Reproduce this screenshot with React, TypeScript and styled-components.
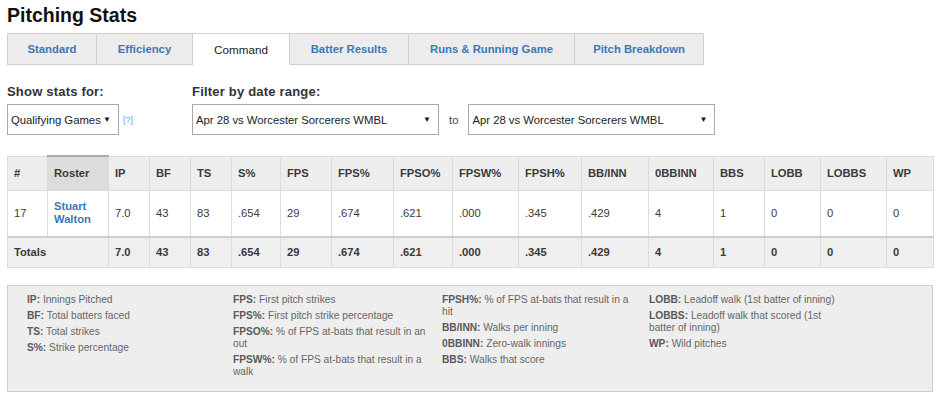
import React from "react";
import styled, { createGlobalStyle } from "styled-components";

const GlobalStyle = createGlobalStyle`
  body {
    margin: 0;
    background: #fff;
    font-family: "Liberation Sans", Arial, sans-serif;
    color: #333;
  }
`;

interface Column {
  key: string;
  width: number;
}

const columns: Column[] = [
  { key: "#", width: 40 },
  { key: "Roster", width: 61 },
  { key: "IP", width: 41 },
  { key: "BF", width: 41 },
  { key: "TS", width: 41 },
  { key: "S%", width: 49 },
  { key: "FPS", width: 51 },
  { key: "FPS%", width: 62 },
  { key: "FPSO%", width: 59 },
  { key: "FPSW%", width: 66 },
  { key: "FPSH%", width: 63 },
  { key: "BB/INN", width: 67 },
  { key: "0BBINN", width: 65 },
  { key: "BBS", width: 51 },
  { key: "LOBB", width: 56 },
  { key: "LOBBS", width: 66 },
  { key: "WP", width: 47 },
];

const playerRow = ["7.0", "43", "83", ".654", "29", ".674", ".621", ".000", ".345", ".429", "4", "1", "0", "0", "0"];

const tabs = [
  { name: "Standard", width: 90 },
  { name: "Efficiency", width: 96 },
  { name: "Command", width: 97 },
  { name: "Batter Results", width: 119 },
  { name: "Runs & Running Game", width: 166 },
  { name: "Pitch Breakdown", width: 129 },
];

const legend: [string, string][][] = [
  [
    ["IP:", "Innings Pitched"],
    ["BF:", "Total batters faced"],
    ["TS:", "Total strikes"],
    ["S%:", "Strike percentage"],
  ],
  [
    ["FPS:", "First pitch strikes"],
    ["FPS%:", "First pitch strike percentage"],
    ["FPSO%:", "% of FPS at-bats that result in an out"],
    ["FPSW%:", "% of FPS at-bats that result in a walk"],
  ],
  [
    ["FPSH%:", "% of FPS at-bats that result in a hit"],
    ["BB/INN:", "Walks per inning"],
    ["0BBINN:", "Zero-walk innings"],
    ["BBS:", "Walks that score"],
  ],
  [
    ["LOBB:", "Leadoff walk (1st batter of inning)"],
    ["LOBBS:", "Leadoff walk that scored (1st batter of inning)"],
    ["WP:", "Wild pitches"],
  ],
];

const Page = styled.div`
  padding: 0 7px;
  width: 926px;
`;

const Title = styled.h1`
  margin: 0;
  padding-top: 3px;
  font-size: 19.5px;
  line-height: 24px;
  font-weight: bold;
  color: #111;
`;

const TabBar = styled.div`
  display: flex;
  margin-top: 6px;
`;

const Tab = styled.div<{ $active?: boolean; $w: number }>`
  width: ${(p) => p.$w}px;
  height: 32px;
  box-sizing: border-box;
  display: flex;
  align-items: center;
  justify-content: center;
  font-size: ${(p) => (p.$active ? "11.7px" : "11.3px")};
  font-weight: ${(p) => (p.$active ? "normal" : "bold")};
  color: ${(p) => (p.$active ? "#222" : "#3b78b5")};
  background: ${(p) => (p.$active ? "#fff" : "#ececec")};
  border: 1px solid #d0d0d0;
  border-left: none;
  border-bottom-color: ${(p) => (p.$active ? "#fff" : "#d0d0d0")};

  &:first-child {
    border-left: 1px solid #d0d0d0;
  }
`;

const Filters = styled.div`
  display: flex;
  margin-top: 19px;
`;

const FilterGroup = styled.div<{ $w?: number }>`
  display: flex;
  flex-direction: column;
  flex-shrink: 0;
  gap: 5px;
  width: ${(p) => (p.$w ? `${p.$w}px` : "auto")};
`;

const Label = styled.div`
  font-size: 13px;
  font-weight: bold;
  letter-spacing: 0.2px;
  color: #333;
  line-height: 15px;
`;

const Controls = styled.div`
  display: flex;
  align-items: center;
`;

const Select = styled.div<{ $w: number }>`
  width: ${(p) => p.$w}px;
  height: 31px;
  box-sizing: border-box;
  border: 1px solid #a9a9a9;
  background: #fff;
  display: flex;
  align-items: center;
  justify-content: space-between;
  padding: 0 7px 0 3px;
  font-size: 11.3px;
  color: #222;
  white-space: nowrap;
`;

const Arrow = styled.span`
  font-size: 8px;
  color: #111;
`;

const Help = styled.span`
  font-size: 9px;
  color: #7b9bc0;
  margin-left: 4px;
`;

const To = styled.span`
  font-size: 11.3px;
  color: #444;
  margin: 0 10px;
`;

const Table = styled.table`
  margin-top: 20px;
  border-collapse: collapse;
  table-layout: fixed;
  width: 926px;
  font-size: 11.2px;
  color: #3a3a3a;
`;

const Th = styled.th<{ $sorted?: boolean }>`
  text-align: left;
  font-weight: bold;
  height: 34px;
  padding: 0 6px;
  box-sizing: border-box;
  background: ${(p) => (p.$sorted ? "#dcdcdc" : "#eeeeee")};
  border: 1px solid #dcdcdc;
  border-top: ${(p) => (p.$sorted ? "2px solid #aaa" : "1px solid #dcdcdc")};
`;

const Td = styled.td<{ $total?: boolean }>`
  text-align: left;
  padding: 0 6px;
  height: ${(p) => (p.$total ? "29px" : "45px")};
  font-weight: ${(p) => (p.$total ? "bold" : "normal")};
  background: ${(p) => (p.$total ? "#efefef" : "#fff")};
  border: 1px solid #dcdcdc;
  border-top: ${(p) => (p.$total ? "2px solid #cfcfcf" : "1px solid #dcdcdc")};
`;

const PlayerLink = styled.a`
  color: #3b78b5;
  font-weight: bold;
  text-decoration: none;
  display: block;
  line-height: 13px;
`;

const Legend = styled.div`
  margin-top: 17px;
  height: 107px;
  box-sizing: border-box;
  background: #eeeeee;
  border: 1px solid #cccccc;
  padding: 8px 0 0 19px;
  display: grid;
  grid-template-columns: 206px 209px 207px 207px;
`;

const LegendCol = styled.div`
  display: flex;
  flex-direction: column;
  gap: 4px;
  padding-right: 9px;
`;

const LegendItem = styled.div`
  font-size: 10.2px;
  line-height: 12px;
  color: #666;

  b {
    color: #5a5a5a;
  }
`;

export default function App() {
  return (
    <>
      <GlobalStyle />
      <Page>
        <Title>Pitching Stats</Title>
        <TabBar>
          {tabs.map((t) => (
            <Tab key={t.name} $w={t.width} $active={t.name === "Command"}>
              {t.name}
            </Tab>
          ))}
        </TabBar>

        <Filters>
          <FilterGroup $w={185}>
            <Label>Show stats for:</Label>
            <Controls>
              <Select $w={112}>
                <span>Qualifying Games</span>
                <Arrow>▼</Arrow>
              </Select>
              <Help>[?]</Help>
            </Controls>
          </FilterGroup>
          <FilterGroup>
            <Label>Filter by date range:</Label>
            <Controls>
              <Select $w={247}>
                <span>Apr 28 vs Worcester Sorcerers WMBL</span>
                <Arrow>▼</Arrow>
              </Select>
              <To>to</To>
              <Select $w={247}>
                <span>Apr 28 vs Worcester Sorcerers WMBL</span>
                <Arrow>▼</Arrow>
              </Select>
            </Controls>
          </FilterGroup>
        </Filters>

        <Table>
          <colgroup>
            {columns.map((c) => (
              <col key={c.key} style={{ width: c.width }} />
            ))}
          </colgroup>
          <thead>
            <tr>
              {columns.map((c) => (
                <Th key={c.key} $sorted={c.key === "Roster"}>
                  {c.key}
                </Th>
              ))}
            </tr>
          </thead>
          <tbody>
            <tr>
              <Td>17</Td>
              <Td>
                <PlayerLink href="#">
                  Stuart
                  <br />
                  Walton
                </PlayerLink>
              </Td>
              {playerRow.map((v, i) => (
                <Td key={i}>{v}</Td>
              ))}
            </tr>
            <tr>
              <Td $total colSpan={2}>
                Totals
              </Td>
              {playerRow.map((v, i) => (
                <Td $total key={i}>
                  {v}
                </Td>
              ))}
            </tr>
          </tbody>
        </Table>

        <Legend>
          {legend.map((col, i) => (
            <LegendCol key={i}>
              {col.map(([k, v]) => (
                <LegendItem key={k}>
                  <b>{k}</b> {v}
                </LegendItem>
              ))}
            </LegendCol>
          ))}
        </Legend>
      </Page>
    </>
  );
}
